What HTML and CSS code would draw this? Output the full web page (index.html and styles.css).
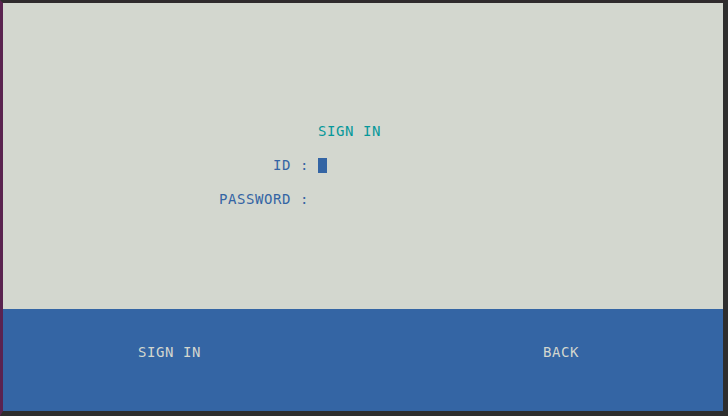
FILE: index.html
```html
<!DOCTYPE html>
<html>
<head>
<meta charset="utf-8">
<link rel="stylesheet" href="styles.css">
</head>
<body>
<div class="window">
  <div class="term">
    <div class="screen">
      <div class="row"></div>
      <div class="row"></div>
      <div class="row"></div>
      <div class="row"></div>
      <div class="row"></div>
      <div class="row"></div>
      <div class="row"></div>
      <div class="row title">                                   SIGN IN</div>
      <div class="row"></div>
      <div class="row label">                              ID : <span class="cursor"> </span></div>
      <div class="row"></div>
      <div class="row label">                        PASSWORD :</div>
    </div>
    <div class="bar">
      <div class="row"></div>
      <div class="row"></div>
      <div class="row">               SIGN IN                                      BACK</div>
    </div>
  </div>
</div>
</body>
</html>
```

FILE: styles.css
```css
html, body {
  margin: 0;
  padding: 0;
  width: 728px;
  height: 416px;
  overflow: hidden;
  background: #2d2d2d;
}
.window {
  width: 728px;
  height: 416px;
  box-sizing: border-box;
  border-top: 3px solid #2f2b2d;
  border-left: 3px solid #5a2350;
  border-right: 5px solid #2e2e2e;
  border-bottom: 5px solid #2e2e2e;
}
.term {
  width: 720px;
  height: 408px;
  display: flex;
  flex-direction: column;
  font-family: "DejaVu Sans Mono", monospace;
  font-size: 14px;
  letter-spacing: 0.57px;
}
.screen {
  height: 306px;
  background: #d3d7cf;
}
.bar {
  flex: 1;
  background: #3465a4;
  color: #d3d7cf;
}
.row {
  height: 16px;
  padding-top: 1px;
  line-height: 17px;
  white-space: pre;
}
.title {
  color: #06989a;
}
.label {
  color: #3465a4;
}
.cursor {
  display: inline-block;
  width: 9px;
  height: 15px;
  vertical-align: top;
  margin-top: 1px;
  margin-right: -0.57px;
  background: #3465a4;
}
```
